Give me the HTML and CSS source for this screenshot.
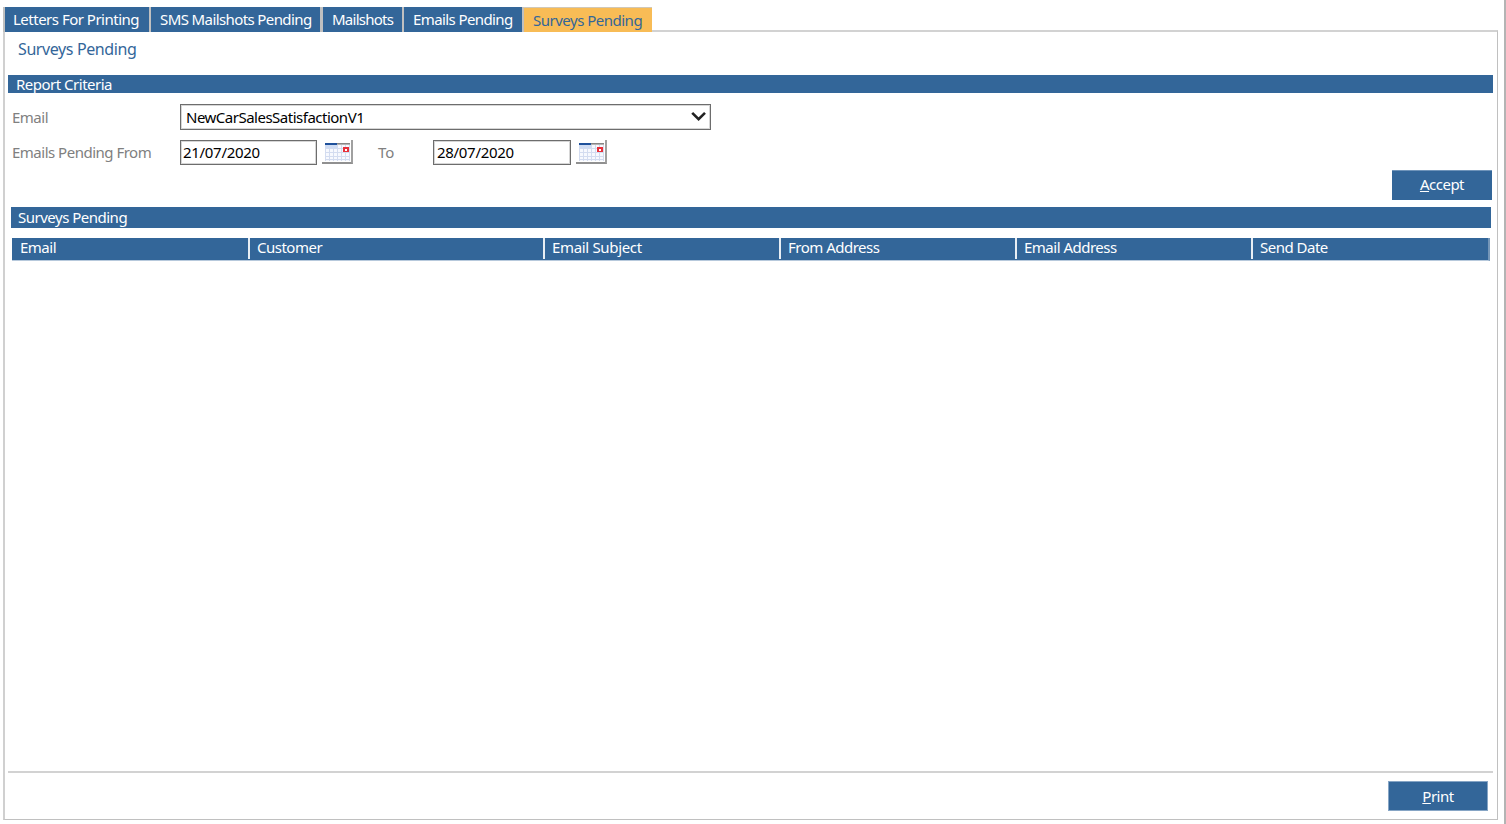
FILE: index.html
```html
<!DOCTYPE html>
<html lang="en">

<head>
    <meta charset="UTF-8">
    <title>Surveys Pending</title>
    <link rel="stylesheet" href="styles.css">
</head>

<body>

    <div class="tabs">
        <a class="tab tab-letters">Letters For Printing</a>
        <a class="tab tab-sms">SMS Mailshots Pending</a>
        <a class="tab tab-mailshots">Mailshots</a>
        <a class="tab tab-emails">Emails Pending</a>
        <a class="tab tab-surveys active">Surveys Pending</a>
    </div>

    <div class="panel">
        <h1>Surveys Pending</h1>
        <h2 class="criteria-title">Report Criteria</h2>

        <form id="criteriaForm" class="criteria">
            <div class="row">
                <label for="email">Email</label>
                <div class="select" id="email" tabindex="0">
                    <span>NewCarSalesSatisfactionV1</span>
                    <svg width="16" height="12" viewBox="0 0 16 12">
                        <path d="M1.2 1.8 L7.6 8.2 L14 1.8" fill="none" stroke="#222" stroke-width="2.6" />
                    </svg>
                </div>
            </div>
            <div class="row row-dates">
                <label for="dateFrom">Emails Pending From</label>
                <input type="text" id="dateFrom" name="dateFrom" value="21/07/2020">
                <button type="button" class="calendar" aria-label="Pick from date">
                    <svg width="25" height="18" viewBox="0 0 25 18" shape-rendering="crispEdges">
                        <path fill="#f7f9fe" d="M0 0h25v18H0z" />
                        <path stroke="#d3dcf0" fill="none" d="M.5 2v16M4.5 2v16M8.5 2v16M12.5 2v16M16.5 2v16M20.5 2v16M24.5 2v16M0 5.5h25M0 9.5h25M0 13.5h25M0 16.5h25" />
                        <path fill="#cfdcf3" d="M0 2h12v3H0z" />
                        <path fill="#1f519b" d="M0 0h12v2H0z" />
                        <path fill="#868686" d="M12 0h13v1H12z" />
                        <path fill="#b4b4b4" d="M12 1h13v1H12z" />
                        <path fill="#e8303a" d="M18 4h6v5h-6z" />
                        <path fill="#fff" d="M20 6h2v2h-2z" />
                    </svg>
                </button>
                <label for="dateTo" class="label-to">To</label>
                <input type="text" id="dateTo" name="dateTo" value="28/07/2020">
                <button type="button" class="calendar" aria-label="Pick to date">
                    <svg width="25" height="18" viewBox="0 0 25 18" shape-rendering="crispEdges">
                        <path fill="#f7f9fe" d="M0 0h25v18H0z" />
                        <path stroke="#d3dcf0" fill="none" d="M.5 2v16M4.5 2v16M8.5 2v16M12.5 2v16M16.5 2v16M20.5 2v16M24.5 2v16M0 5.5h25M0 9.5h25M0 13.5h25M0 16.5h25" />
                        <path fill="#cfdcf3" d="M0 2h12v3H0z" />
                        <path fill="#1f519b" d="M0 0h12v2H0z" />
                        <path fill="#868686" d="M12 0h13v1H12z" />
                        <path fill="#b4b4b4" d="M12 1h13v1H12z" />
                        <path fill="#e8303a" d="M18 4h6v5h-6z" />
                        <path fill="#fff" d="M20 6h2v2h-2z" />
                    </svg>
                </button>
            </div>
            <button type="button" class="button accept"><u>A</u>ccept</button>
        </form>

        <h2 class="results-title">Surveys Pending</h2>
        <div class="results">
            <div class="col">Email</div>
            <div class="col">Customer</div>
            <div class="col col-subject">Email Subject</div>
            <div class="col">From Address</div>
            <div class="col">Email Address</div>
            <div class="col">Send Date</div>
        </div>

        <div class="footer">
            <button type="button" class="button print"><u>P</u>rint</button>
        </div>
    </div>

</body>

</html>
```
FILE: styles.css
```css
* {
    box-sizing: border-box;
}

body {
    margin: 0;
    height: 824px;
    padding: 7px 7px 4px 3px;
    border-right: 2px solid #b4b4b4;
    background-color: #fff;
    font-family: "Noto Sans", "Open Sans", sans-serif;
    font-size: 15px;
    letter-spacing: -0.5px;
    overflow: hidden;
}

.tabs {
    display: flex;
    height: 23px;
}

.tab {
    height: 25px;
    flex: none;
    position: relative;
    border-left: 2px solid #c0c0c0;
    background-color: #336699;
    color: #fff;
    line-height: 25px;
    padding-left: 8px;
    white-space: nowrap;
}

.tab-letters {
    width: 146px;
}

.tab-sms {
    width: 171px;
    padding-left: 9px;
    letter-spacing: -0.6px;
}

.tab-mailshots {
    width: 82px;
    border-left-width: 3px;
    padding-left: 9px;
    letter-spacing: -0.75px;
}

.tab-emails {
    width: 120px;
    padding-left: 9px;
    letter-spacing: -0.6px;
}

.tab-surveys {
    width: 130px;
    padding-left: 9px;
}

.tab.active {
    background-color: #f8bc56;
    color: #336699;
    border-top: 1px solid #d0c8b8;
}

.panel {
    display: flex;
    flex-direction: column;
    height: 790px;
    width: 1495px;
    border: 1px solid #c0c0c0;
    border-top: 2px solid #d2d2d2;
    border-left: 2px solid #d0d0d0;
    padding: 0 4px 0 3px;
}

h1,
h2 {
    margin: 0;
    font-weight: normal;
}

h1 {
    height: 43px;
    padding-left: 10px;
    color: #336699;
    font-size: 16px;
    letter-spacing: -0.4px;
    line-height: 35px;
}

h2 {
    background-color: #336699;
    color: #fff;
    font-size: 15px;
}

.criteria-title {
    height: 18px;
    line-height: 19px;
    padding-left: 8px;
}

.criteria {
    display: flex;
    flex-direction: column;
    height: 114px;
    padding: 11px 1px 0 4px;
}

.row {
    display: flex;
    align-items: center;
    height: 26px;
    color: #808080;
}

.row-dates {
    margin-top: 9px;
    height: 26px;
}

.row label {
    width: 168px;
}

.row .label-to {
    width: 55px;
    margin-left: 25px;
    letter-spacing: 0;
}

.select,
input[type="text"] {
    border: 1px solid #6d6d6d;
    background-color: #fff;
    box-shadow: inset 0 0 0 1px #d6d6d6;
    color: #000;
    font-family: inherit;
    font-size: 15px;
}

.select {
    display: flex;
    align-items: center;
    justify-content: space-between;
    width: 531px;
    height: 26px;
    padding: 0 3px 0 5px;
}

input[type="text"] {
    width: 138px;
    height: 25px;
    padding: 0 2px;
    letter-spacing: -0.3px;
}

#dateFrom {
    width: 137px;
}

#dateTo {
    padding-left: 3px;
}

.calendar {
    width: 31px;
    height: 24px;
    margin-left: 5px;
    padding: 1px 0 0 3px;
    border: 0;
    border-right: 2px solid #a0a0a0;
    border-bottom: 2px solid #909090;
    background-color: #fff;
    line-height: 0;
    text-align: left;
}

.button {
    width: 100px;
    height: 30px;
    flex: none;
    border: 0;
    border-top: 1px solid #6f94ba;
    background-color: #336699;
    color: #fff;
    font-family: inherit;
    font-size: 15px;
    letter-spacing: inherit;
    padding: 0;
}

.accept {
    align-self: flex-end;
    margin-top: 5px;
    padding-bottom: 3px;
}

.results-title {
    height: 21px;
    margin: 0 2px 0 3px;
    padding-left: 7px;
    line-height: 21px;
}

.results {
    display: grid;
    grid-template-columns: 236px 295px 236px 236px 236px 239px;
    height: 23px;
    margin: 10px 3px 0 4px;
    background-color: #336699;
    border-bottom: 1px solid #b7c9dc;
    border-right: 2px solid #7596b8;
    color: #fff;
}

.col {
    height: 21px;
    padding-left: 8px;
    line-height: 19px;
}

.col + .col {
    border-left: 2px solid #e8eef4;
    padding-left: 7px;
}

.col-subject {
    letter-spacing: -0.33px;
}

.footer {
    display: flex;
    justify-content: flex-end;
    height: 48px;
    margin-top: auto;
    padding: 8px 5px 0 0;
    border-top: 2px solid #d2d2d2;
}

.print {
    border: 1px solid #86a5c5;
}
```
